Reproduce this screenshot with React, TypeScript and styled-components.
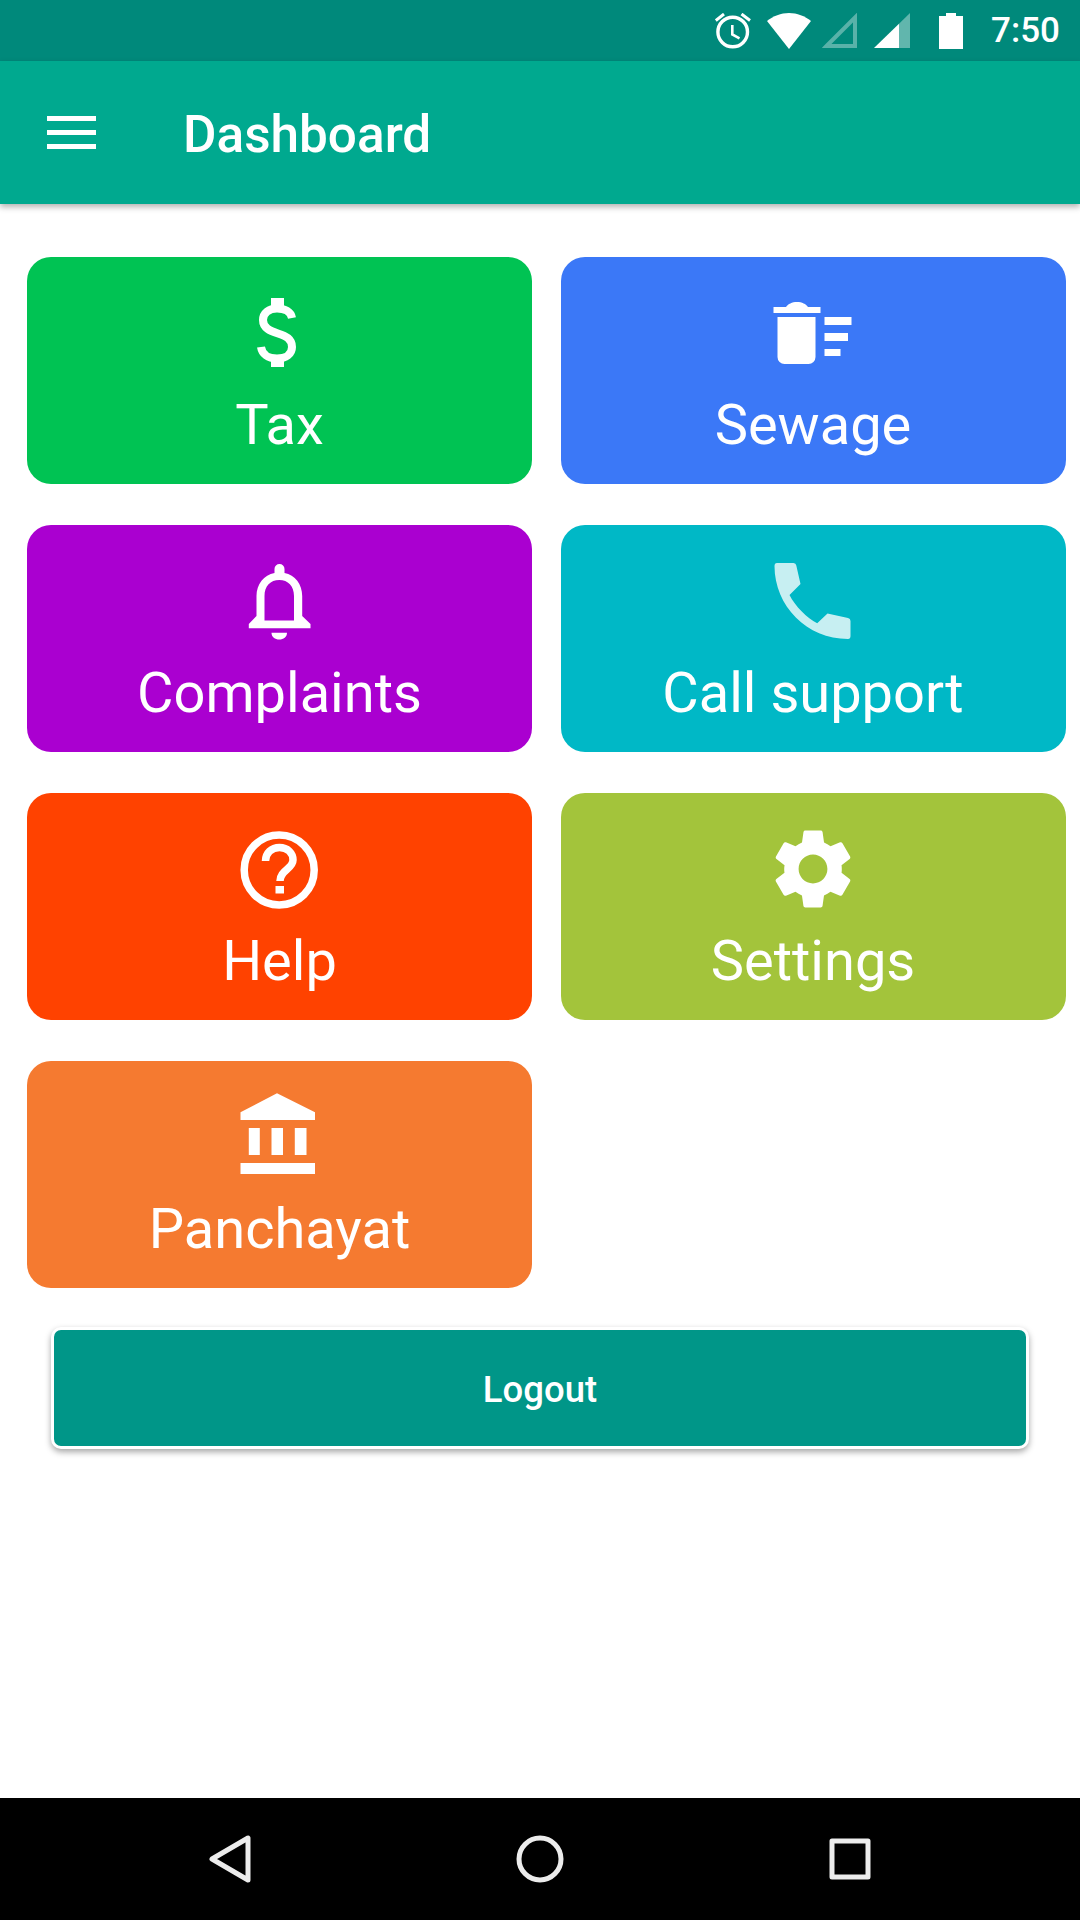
import type { ReactNode } from 'react'
import { createGlobalStyle, styled } from 'styled-components'

const GlobalStyle = createGlobalStyle`
  html, body {
    margin: 0;
    padding: 0;
    background: #fff;
    font-family: Roboto, "Noto Sans", sans-serif;
  }
`

const Page = styled.div`
  width: 1080px;
  height: 1920px;
  display: flex;
  flex-direction: column;
  overflow: hidden;
`

const StatusBar = styled.div`
  height: 61px;
  flex: none;
  background: #00897b;
  display: flex;
  align-items: center;
  justify-content: flex-end;
  padding-right: 20px;
  color: #fff;
`

const StatusIcon = styled.svg<{ $gap: number }>`
  display: block;
  margin-right: ${({ $gap }) => $gap}px;
`

const Clock = styled.span`
  font-size: 35px;
  font-weight: 500;
  line-height: 61px;
`

const AppBar = styled.header`
  height: 143px;
  flex: none;
  background: #00a98f;
  box-shadow: 0 3px 6px rgba(0, 0, 0, 0.3);
  display: flex;
  align-items: center;
  padding-left: 47px;
  color: #fff;
  position: relative;
`

const MenuIcon = styled.svg`
  display: block;
  margin-right: 87px;
`

const Title = styled.h1`
  margin: 0;
  padding-top: 3px;
  font-size: 51.3px;
  font-weight: 500;
`

const Main = styled.main`
  flex: 1;
  padding: 53px 14px 0 27px;
`

const Grid = styled.div`
  display: grid;
  grid-template-columns: 505px 505px;
  grid-auto-rows: 227px;
  column-gap: 28.5px;
  row-gap: 41px;
`

const Card = styled.div<{ $bg: string }>`
  background: ${({ $bg }) => $bg};
  border-radius: 24px;
  display: flex;
  flex-direction: column;
  align-items: center;
  padding-top: 28px;
  color: #fff;
  box-sizing: border-box;
`

const CardIcon = styled.svg<{ $faded?: boolean }>`
  display: block;
  fill: #fff;
  fill-rule: evenodd;
  opacity: ${({ $faded }) => ($faded ? 0.78 : 1)};
`

const Stroke = styled.path<{ $width: number }>`
  fill: none;
  stroke: #fff;
  stroke-width: ${({ $width }) => $width};
`

const Ring = styled.circle`
  fill: none;
  stroke: #fff;
  stroke-width: 7.5;
`

const CardLabel = styled.div`
  font-size: 56px;
  line-height: 66px;
  margin-top: 11px;
`

const LogoutButton = styled.button`
  display: block;
  box-sizing: border-box;
  width: 978px;
  height: 122px;
  margin: 39px 0 0 24px;
  padding: 3px 0 0;
  background: #009688;
  border: 3px solid #fff;
  border-radius: 10px;
  box-shadow: 0 3px 6px rgba(0, 0, 0, 0.35);
  color: #fff;
  font-family: inherit;
  font-size: 36.5px;
  font-weight: 500;
`

const NavBar = styled.nav`
  height: 122px;
  flex: none;
  background: #000;
  display: grid;
  grid-template-columns: repeat(3, 310px);
  justify-content: center;
  align-items: center;
  justify-items: center;
`

const NavIcon = styled.svg`
  display: block;
  fill: none;
  stroke: #ececec;
  stroke-width: 5;
  stroke-linejoin: round;
`

type Tile = { label: string; bg: string; icon: ReactNode; faded?: boolean }

// icons are drawn in a 96 unit box, measured off the reference
const tiles: Tile[] = [
  {
    label: 'Tax',
    bg: '#00c353',
    icon: (
      <>
        <Stroke
          $width={8}
          d="M60 33C59 27 53 23.5 45 23.5 37 23.5 31 28 31 35 31 43 38 46 46 48.5 54 51 60 54 60 62 60 69 54 73.5 45 73.5 36 73.5 30 69 29 62"
        />
        <path d="M39 13h13v11H39zM39 72h13v10H39z" />
      </>
    ),
  },
  {
    label: 'Sewage',
    bg: '#3b78f7',
    icon: (
      <path d="M12.5 32H50.5V72a7 7 0 0 1-7 7H19.5a7 7 0 0 1-7-7zM8.5 22H21C23 19 27 17 32 17S41 19 43 22H55.5V28H8.5zM59.5 32H86.5V40H59.5zM59.5 48H83V56H59.5zM59.5 64H75.5V71H59.5z" />
    ),
  },
  {
    label: 'Complaints',
    bg: '#aa00d0',
    icon: (
      <path d="M47.5 11a5 5 0 0 1 5 5V20C63 22 70.2 31 70.2 43V63L78.5 71V75.3H16.8V71L24.5 63V43C24.5 31 32 22 42.5 20V16a5 5 0 0 1 5-5zM32.5 67.5H62V43C62 33 56 27 47.3 27 38.5 27 32.5 33 32.5 43zM39.5 79.7H55C55 84 51.5 86.5 47.3 86.5 43 86.5 39.5 84 39.5 79.7z" />
    ),
  },
  {
    label: 'Call support',
    bg: '#00b8c6',
    faded: true,
    icon: (
      <path d="M12 10H28.5Q31 10 31.3 12.5L35.5 31 24.5 42C30 53 42 65 52.2 70.3L62.5 60.5 83 65Q85.5 65.5 85.5 68V83Q85.5 86 83 86C42 86 9.5 53 9.5 13Q9.5 10 12 10z" />
    ),
  },
  {
    label: 'Help',
    bg: '#ff4200',
    icon: (
      <>
        <Ring cx="47.2" cy="49" r="35" />
        <Stroke $width={7.5} d="M33.5 40C33.5 32 39.5 26.5 47.5 26.5 55.5 26.5 61 32 61 39 61 48 48 49 48 60" />
        <path d="M43.5 65h8.5v7.5h-8.5z" />
      </>
    ),
  },
  {
    label: 'Settings',
    bg: '#a3c43b',
    icon: (
      <path
        transform="scale(4)"
        d="M19.14 12.94c.04-.3.06-.61.06-.94 0-.32-.02-.64-.07-.94l2.03-1.58c.18-.14.23-.41.12-.61l-1.92-3.32c-.12-.22-.37-.29-.59-.22l-2.39.96c-.5-.38-1.03-.7-1.62-.94l-.36-2.54c-.04-.24-.24-.41-.48-.41h-3.84c-.24 0-.43.17-.47.41l-.36 2.54c-.59.24-1.13.57-1.62.94l-2.39-.96c-.22-.08-.47 0-.59.22L2.74 8.87c-.12.21-.08.47.12.61l2.03 1.58c-.05.3-.09.63-.09.94s.02.64.07.94l-2.03 1.58c-.18.14-.23.41-.12.61l1.92 3.32c.12.22.37.29.59.22l2.39-.96c.5.38 1.03.7 1.62.94l.36 2.54c.05.24.24.41.48.41h3.84c.24 0 .44-.17.47-.41l.36-2.54c.59-.24 1.13-.56 1.62-.94l2.39.96c.22.08.47 0 .59-.22l1.92-3.32c.12-.22.07-.47-.12-.61l-2.01-1.58zM12 15.6c-1.98 0-3.6-1.62-3.6-3.6s1.62-3.6 3.6-3.6 3.6 1.62 3.6 3.6-1.62 3.6-3.6 3.6z"
      />
    ),
  },
  {
    label: 'Panchayat',
    bg: '#f57a30',
    icon: (
      <path d="M45 4.3 83 23.3V31H8.5V23.3zM16.8 39h11v27h-11zM39.5 39h11.5v27H39.5zM62.8 39h11.7v27H62.8zM8.5 74H83v11H8.5z" />
    ),
  },
]

const App = () => (
  <>
    <GlobalStyle />
    <Page>
      <StatusBar>
        <StatusIcon $gap={16} width="36" height="36" viewBox="0 0 36 36" fill="none" stroke="#fff">
          <circle cx="17.7" cy="19" r="14.8" strokeWidth="3.4" />
          <path d="M.8 7.5 9 1M26.5 1 35 7.5" strokeWidth="3" />
          <path d="M17.3 12v9.5l7.2 3.8" strokeWidth="2.6" />
        </StatusIcon>
        <StatusIcon $gap={11} width="44" height="36" viewBox="0 0 44 36">
          <path d="M22 36 0 8C6 3 14 0 22 0s16 3 22 8z" fill="#fff" />
        </StatusIcon>
        <StatusIcon $gap={17} width="35" height="35" viewBox="0 0 35 35">
          <path d="M4.5 33 33 4.5V33z" fill="none" stroke="#fff" strokeOpacity="0.35" strokeWidth="4" />
        </StatusIcon>
        <StatusIcon $gap={29} width="36" height="35" viewBox="0 0 36 35">
          <path d="M25 10.7 36 0v35H25z" fill="#fff" fillOpacity="0.38" />
          <path d="M0 35 25 10.7V35z" fill="#fff" />
        </StatusIcon>
        <StatusIcon $gap={28} width="24" height="36" viewBox="0 0 24 36">
          <path d="M7 0h10v3h7v33H0V3h7z" fill="#fff" />
        </StatusIcon>
        <Clock>7:50</Clock>
      </StatusBar>

      <AppBar>
        <MenuIcon width="49" height="33" viewBox="0 0 49 33">
          <path d="M0 0h49v5H0zM0 14h49v5H0zM0 28h49v5H0z" fill="#fff" />
        </MenuIcon>
        <Title>Dashboard</Title>
      </AppBar>

      <Main>
        <Grid>
          {tiles.map((tile) => (
            <Card key={tile.label} $bg={tile.bg}>
              <CardIcon width="96" height="96" viewBox="0 0 96 96" $faded={tile.faded}>
                {tile.icon}
              </CardIcon>
              <CardLabel>{tile.label}</CardLabel>
            </Card>
          ))}
        </Grid>
        <LogoutButton>Logout</LogoutButton>
      </Main>

      <NavBar>
        <NavIcon width="44" height="50" viewBox="0 0 44 50">
          <path d="M40 4v42L4 25z" />
        </NavIcon>
        <NavIcon width="48" height="48" viewBox="0 0 48 48">
          <circle cx="24" cy="24" r="21" />
        </NavIcon>
        <NavIcon width="42" height="42" viewBox="0 0 42 42">
          <path d="M3 3h36v36H3z" />
        </NavIcon>
      </NavBar>
    </Page>
  </>
)

export default App
